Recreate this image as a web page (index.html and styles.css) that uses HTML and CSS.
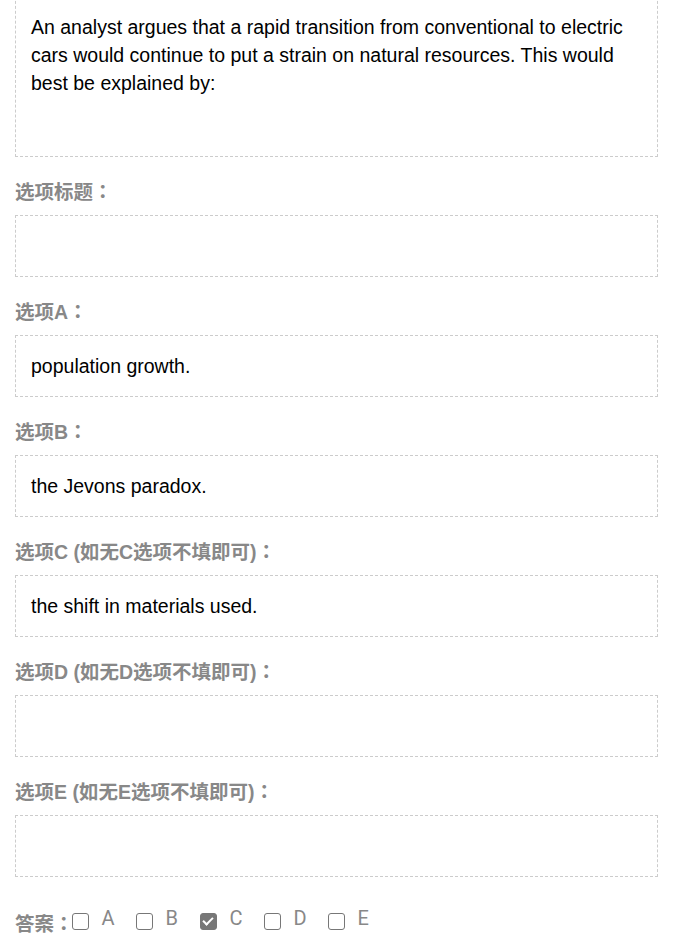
FILE: index.html
```html
<!DOCTYPE html>
<html lang="en">
<head>
    <meta charset="UTF-8">
    <meta name="viewport" content="width=device-width, initial-scale=1.0">
    <title>编辑题目</title>
    <link rel="stylesheet" href="styles.css">
</head>
<body>
    <div class="form">
        <div class="field-box question">An analyst argues that a rapid transition from conventional to electric cars would continue to put a strain on natural resources. This would best be explained by:</div>

        <div class="field-label">选项标题：</div>
        <div class="field-box"></div>

        <div class="field-label">选项A：</div>
        <div class="field-box">population growth.</div>

        <div class="field-label">选项B：</div>
        <div class="field-box">the Jevons paradox.</div>

        <div class="field-label">选项C (如无C选项不填即可)：</div>
        <div class="field-box">the shift in materials used.</div>

        <div class="field-label">选项D (如无D选项不填即可)：</div>
        <div class="field-box"></div>

        <div class="field-label">选项E (如无E选项不填即可)：</div>
        <div class="field-box"></div>

        <div class="answer-row">
            <span class="answer-label">答案：</span>
            <label class="option"><input type="checkbox" class="check"><span>A</span></label>
            <label class="option"><input type="checkbox" class="check"><span>B</span></label>
            <label class="option"><input type="checkbox" class="check" checked><span>C</span></label>
            <label class="option"><input type="checkbox" class="check"><span>D</span></label>
            <label class="option"><input type="checkbox" class="check"><span>E</span></label>
        </div>
    </div>
</body>
</html>
```

FILE: styles.css
```css
* {
    box-sizing: border-box;
}

body {
    margin: 0;
    background-color: #fff;
    font-family: "Liberation Sans", Arial, "Noto Sans CJK TC", sans-serif;
}

.form {
    width: 643px;
    margin: -4px 0 0 15px;
}

.field-box {
    border: 1px dashed #ccc;
    padding: 16px 15px;
    min-height: 62px;
    font-size: 19.5px;
    line-height: 28px;
    color: #000;
}

.question {
    min-height: 161px;
}

.field-label {
    padding-top: 24px;
    margin-bottom: 12px;
    font-size: 19.5px;
    line-height: 22px;
    font-weight: bold;
    color: #888;
}

.answer-row {
    display: flex;
    align-items: center;
    padding-top: 28px;
    height: 60px;
}

.answer-label {
    font-size: 19.5px;
    font-weight: bold;
    color: #888;
    margin-right: -2px;
    position: relative;
    top: 1px;
}

.option {
    display: flex;
    align-items: center;
    flex: none;
    width: 64px;
    font-family: Roboto, "Liberation Sans", sans-serif;
    font-size: 20px;
    color: #888;
}

.option span {
    margin-left: 13px;
    position: relative;
    top: -3px;
}

.check {
    appearance: none;
    -webkit-appearance: none;
    width: 17px;
    height: 17px;
    margin: 0;
    border: 1.5px solid #777;
    border-radius: 3px;
    background-color: #fff;
    position: relative;
}

.check:checked {
    background-color: #777;
}

.check:checked::after {
    content: "";
    position: absolute;
    left: 4.5px;
    top: 1px;
    width: 4px;
    height: 8px;
    border: solid #fff;
    border-width: 0 2.5px 2.5px 0;
    transform: rotate(45deg);
}
```
